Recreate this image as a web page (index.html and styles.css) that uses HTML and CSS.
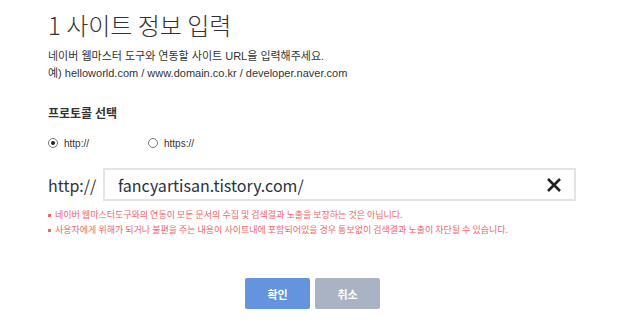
FILE: index.html
```html
<!DOCTYPE html>
<html>
<head>
  <title>사이트 정보 입력</title>
  <link rel="stylesheet" href="styles.css">
</head>
<body>
  <div class="container">
    <h1 class="title">1 사이트 정보 입력</h1>
    <p class="desc">네이버 웹마스터 도구와 연동할 사이트 URL을 입력해주세요.<br>예) helloworld.com / www.domain.co.kr / developer.naver.com</p>

    <h2 class="section">프로토콜 선택</h2>
    <div class="protocols">
      <label class="radio"><span class="dot checked"></span>http://</label>
      <label class="radio"><span class="dot"></span>https://</label>
    </div>

    <div class="url-row">
      <span class="prefix">http://</span>
      <div class="url-box">
        <span class="url-text">fancyartisan.tistory.com/</span>
        <svg class="clear" width="16" height="16" viewBox="0 0 16 16">
          <path d="M2 2 L14 14 M14 2 L2 14" stroke="#222" stroke-width="2.6" fill="none"/>
        </svg>
      </div>
    </div>

    <ul class="notes">
      <li>네이버 웹마스터도구와의 연동이 모든 문서의 수집 및 검색결과 노출을 보장하는 것은 아닙니다.</li>
      <li>사용자에게 위해가 되거나 불편을 주는 내용이 사이트내에 포함되어있을 경우 통보없이 검색결과 노출이 차단될 수 있습니다.</li>
    </ul>

    <div class="buttons">
      <button class="btn ok">확인</button>
      <button class="btn cancel">취소</button>
    </div>
  </div>
</body>
</html>
```

FILE: styles.css
```css
body {
  margin: 0;
  background: #fff;
  font-family: "Noto Sans CJK KR", "Liberation Sans", sans-serif;
  color: #333;
}
.container {
  padding: 8px 0 0 48px;
  width: 528px;
}
.title {
  margin: 0;
  font-size: 24px;
  font-weight: 300;
  line-height: 34px;
  color: #333;
}
.desc {
  margin: 6px 0 0;
  font-family: "Liberation Sans", "Noto Sans CJK KR", sans-serif;
  font-size: 11px;
  line-height: 17px;
  color: #333;
}
.section {
  margin: 22px 0 0;
  font-size: 12px;
  font-weight: 700;
  line-height: 18px;
  color: #333;
}
.protocols {
  display: flex;
  margin-top: 13px;
  height: 16px;
  align-items: center;
}
.radio {
  display: flex;
  align-items: center;
  width: 100px;
  font-family: "Liberation Sans", sans-serif;
  font-size: 10px;
  color: #333;
}
.dot {
  width: 10px;
  height: 10px;
  border: 1px solid #777;
  border-radius: 50%;
  margin-right: 6px;
  box-sizing: border-box;
  position: relative;
}
.dot.checked::after {
  content: "";
  position: absolute;
  left: 2px;
  top: 2px;
  width: 4px;
  height: 4px;
  border-radius: 50%;
  background: #222;
}
.url-row {
  display: flex;
  align-items: center;
  margin-top: 17px;
}
.prefix {
  width: 55px;
  font-size: 16px;
  color: #333;
}
.url-box {
  flex: 1;
  height: 33px;
  box-sizing: border-box;
  border: 2px solid #e4e4e4;
  display: flex;
  align-items: center;
  justify-content: space-between;
  padding: 0 12px 0 13px;
}
.url-text {
  font-size: 16px;
  color: #2a3140;
}
.notes {
  list-style: none;
  margin: 6px 0 0;
  padding: 0;
  font-size: 9px;
  line-height: 15px;
  color: #f0686c;
}
.notes li::before {
  content: "";
  display: inline-block;
  width: 3px;
  height: 3px;
  background: #f0686c;
  margin-right: 4px;
  vertical-align: middle;
}
.buttons {
  display: flex;
  justify-content: center;
  gap: 5px;
  margin-top: 41px;
  padding-left: 1px;
}
.btn {
  width: 65px;
  height: 31px;
  border: none;
  border-radius: 2px;
  font-family: "Noto Sans CJK KR", sans-serif;
  font-size: 11px;
  font-weight: 700;
  color: #fff;
}
.ok {
  background: #6494de;
}
.cancel {
  background: #aab3c3;
}
```
